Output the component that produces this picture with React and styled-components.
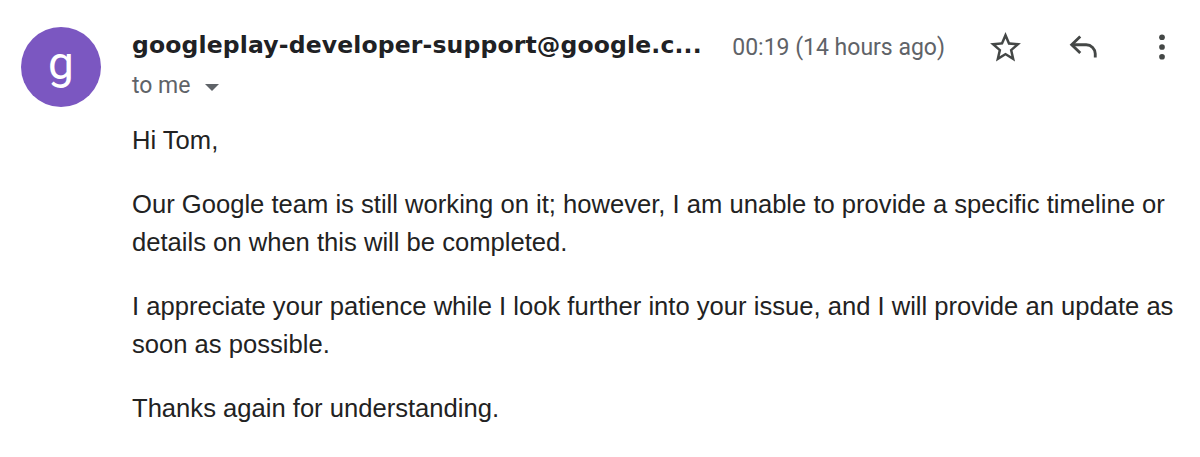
import React from "react";
import styled, { createGlobalStyle } from "styled-components";

const GlobalStyle = createGlobalStyle`
  body {
    margin: 0;
    background: #fff;
  }
`;

// Whole message card
const Message = styled.div`
  width: 1200px;
  height: 457px;
  box-sizing: border-box;
  padding: 27px 0 0 21px;
  display: grid;
  grid-template-columns: 80px 1fr;
  column-gap: 31px;
  background: #fff;
  overflow: hidden;
`;

const Avatar = styled.div`
  width: 80px;
  height: 80px;
  border-radius: 50%;
  background: #7b57c1;
  color: #fff;
  display: flex;
  align-items: center;
  justify-content: center;
  font-family: Roboto, "Open Sans", sans-serif;
  font-size: 46px;
  padding-bottom: 8px;
  box-sizing: border-box;
`;

const Main = styled.div`
  display: flex;
  flex-direction: column;
`;

const Header = styled.div`
  display: flex;
  align-items: flex-start;
  justify-content: space-between;
  padding-right: 18px;
`;

const Sender = styled.div`
  display: flex;
  flex-direction: column;
`;

const Name = styled.div`
  font-family: "DejaVu Sans", "Open Sans", sans-serif;
  font-weight: 700;
  font-size: 23.5px;
  letter-spacing: 0.15px;
  line-height: 30px;
  color: #202124;
  margin-top: 3px;
  white-space: nowrap;
`;

const ToMe = styled.div`
  display: flex;
  align-items: center;
  gap: 14px;
  margin-top: 11px;
  font-family: Roboto, sans-serif;
  font-size: 23px;
  line-height: 30px;
  color: #5f6368;
`;

const Caret = styled.span`
  width: 0;
  height: 0;
  border-left: 7px solid transparent;
  border-right: 7px solid transparent;
  border-top: 7px solid #5f6368;
  margin-top: 2px;
`;

const Actions = styled.div`
  display: flex;
  align-items: center;
`;

const Time = styled.span`
  font-family: Roboto, sans-serif;
  font-size: 23px;
  color: #5f6368;
  margin-right: 40px;
`;

const IconButton = styled.span`
  display: flex;
  align-items: center;
  justify-content: center;
  width: 40px;
  height: 40px;
  margin-left: ${(p) => p.$gap || 0}px;
  color: #444746;
`;

const Body = styled.div`
  margin-top: 20px;
  font-family: "Liberation Sans", Arial, sans-serif;
  font-size: 25.6px;
  line-height: 38px;
  color: #222;

  p {
    margin: 0 0 26px;
  }
`;

const Star = () => (
  <svg width="37" height="37" viewBox="0 0 24 24" fill="currentColor">
    <path d="M22 9.24l-7.19-.62L12 2 9.19 8.63 2 9.24l5.46 4.73L5.82 21 12 17.27 18.18 21l-1.63-7.03L22 9.24zM12 15.4l-3.76 2.27 1-4.28-3.32-2.88 4.38-.38L12 6.1l1.71 4.04 4.38.38-3.32 2.88 1 4.28L12 15.4z" />
  </svg>
);

const Reply = () => (
  <svg width="36" height="36" viewBox="0 0 24 24" fill="none" stroke="currentColor" strokeWidth="1.9">
    <path d="M9.5 5 3.8 10.5 9.5 16" />
    <path d="M4 10.5h9.5a6 6 0 0 1 6 6V19" />
  </svg>
);

const More = () => (
  <svg width="36" height="36" viewBox="0 0 24 24" fill="currentColor">
    <circle cx="12" cy="5.5" r="1.9" />
    <circle cx="12" cy="12" r="1.9" />
    <circle cx="12" cy="18.5" r="1.9" />
  </svg>
);

export default function App() {
  return (
    <>
      <GlobalStyle />
      <Message>
        <Avatar>g</Avatar>
        <Main>
          <Header>
            <Sender>
              <Name>googleplay-developer-support@google.c...</Name>
              <ToMe>
                to me <Caret />
              </ToMe>
            </Sender>
            <Actions>
              <Time>00:19 (14 hours ago)</Time>
              <IconButton><Star /></IconButton>
              <IconButton $gap={39}><Reply /></IconButton>
              <IconButton $gap={38}><More /></IconButton>
            </Actions>
          </Header>
          <Body>
            <p>Hi Tom,</p>
            <p>
              Our Google team is still working on it; however, I am unable to provide a specific timeline or
              <br />
              details on when this will be completed.
            </p>
            <p>
              I appreciate your patience while I look further into your issue, and I will provide an update as
              <br />
              soon as possible.
            </p>
            <p>Thanks again for understanding.</p>
          </Body>
        </Main>
      </Message>
    </>
  );
}
